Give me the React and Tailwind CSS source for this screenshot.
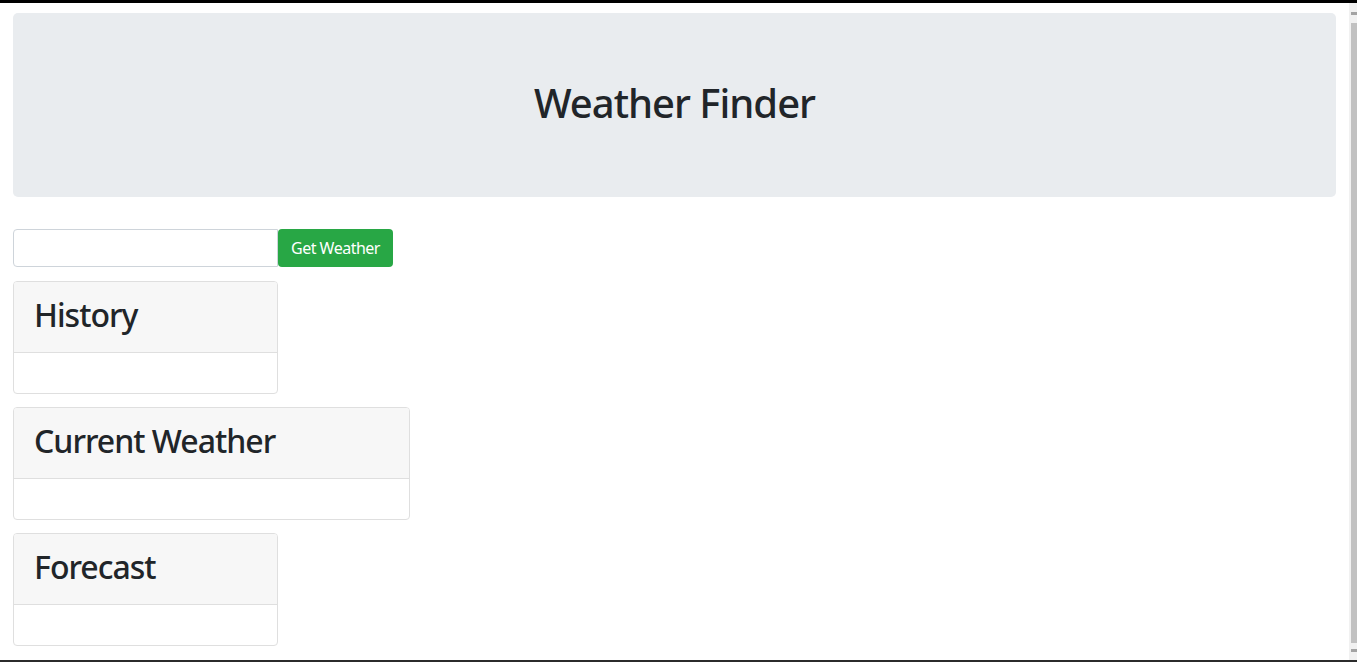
import { useState } from 'react';

const font = { fontFamily: '"Noto Sans", "Open Sans", sans-serif' };

const Panel = ({ title, width }) => (
  <div className={`${width} border border-[#dfdfdf] rounded-[4px] bg-white overflow-hidden`}>
    <div className="bg-[#f7f7f7] border-b border-[#dfdfdf] px-5 pt-[14px] pb-[10px]">
      <h2 className="text-[32px] leading-[38px] font-medium text-[#212529] mb-2 tracking-[-1px]">{title}</h2>
    </div>
    <div className="h-10"></div>
  </div>
);

export default function App() {
  const [city, setCity] = useState('');

  return (
    <div className="h-[662px] w-full bg-white flex flex-col overflow-hidden" style={font}>
      <div className="h-[3px] bg-black shrink-0"></div>
      <div className="flex flex-1 min-h-0">
        <div className="flex-1 px-[13px] pt-[10px]">
          <div className="bg-[#e9ecef] rounded-[5px] h-[184px] flex items-center justify-center mb-8">
            <h1 className="text-[40px] font-medium text-[#212529] tracking-[-1px] -mt-[4px]">Weather Finder</h1>
          </div>

          <div className="flex mb-[14px]">
            <input
              value={city}
              onChange={(e) => setCity(e.target.value)}
              className="w-[265px] h-[38px] border border-[#ced4da] rounded-l-[4px] px-3 outline-none"
            />
            <button className="h-[38px] px-[13px] bg-[#28a745] text-white text-[16px] rounded-[4px] tracking-[-0.5px]">
              Get Weather
            </button>
          </div>

          <div className="flex flex-col items-start gap-[13px]">
            <Panel title="History" width="w-[265px]" />
            <Panel title="Current Weather" width="w-[397px]" />
            <Panel title="Forecast" width="w-[265px]" />
          </div>
        </div>

        {/* scrollbar strip */}
        <div className="w-2 bg-[#f1f1f1] flex flex-col items-end pt-[9px] pb-[8px]">
          <div className="w-[6px] h-[3px] bg-[#a3a3a3] mb-[8px]"></div>
          <div className="w-[6px] flex-1 bg-[#c1c1c1]"></div>
          <div className="w-[6px] h-[3px] bg-[#a3a3a3] mt-[6px]"></div>
        </div>
      </div>
      <div className="h-[2px] bg-[#2b2b2b] shrink-0"></div>
    </div>
  );
}
